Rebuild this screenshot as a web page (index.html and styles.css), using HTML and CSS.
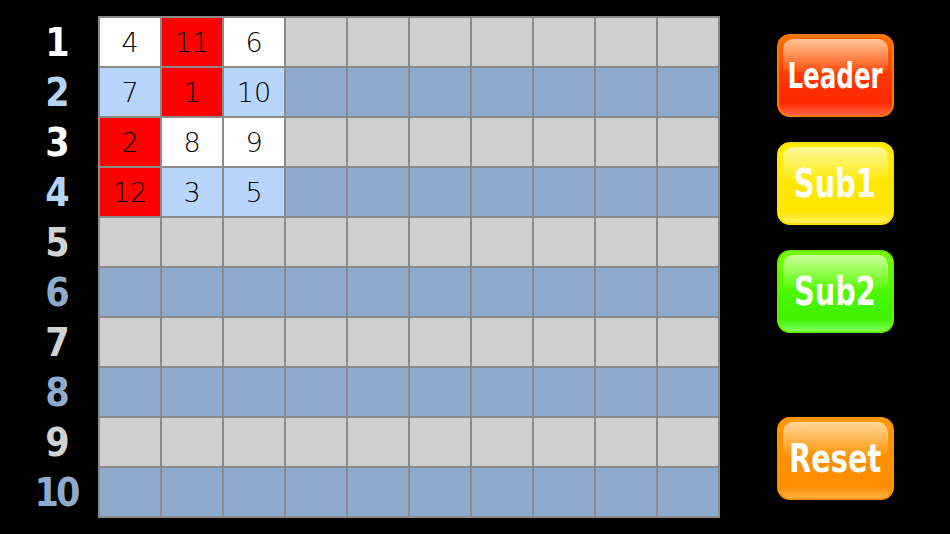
FILE: index.html
```html
<!DOCTYPE html>
<html lang="ja">
<head>
    <meta charset="UTF-8">
    <title>Order Board</title>
    <link rel="stylesheet" href="styles.css">
</head>
<body>
    <div class="board">
        <div class="labels">
            <div class="label lit">1</div>
            <div class="label lit-blue">2</div>
            <div class="label lit">3</div>
            <div class="label lit-blue">4</div>
            <div class="label">5</div>
            <div class="label blue">6</div>
            <div class="label">7</div>
            <div class="label blue">8</div>
            <div class="label">9</div>
            <div class="label blue">10</div>
        </div>

        <div class="grid" id="grid"></div>

        <div class="buttons">
            <button class="btn leader"><span>Leader</span></button>
            <button class="btn sub1"><span>Sub1</span></button>
            <button class="btn sub2"><span>Sub2</span></button>
            <button class="btn reset"><span>Reset</span></button>
        </div>
    </div>

    <script>
        // первые 4 строки x 3 столбца заполнены
        var filled = [
            [['4', 'w'], ['11', 'r'], ['6', 'w']],
            [['7', 'b'], ['1', 'r'], ['10', 'b']],
            [['2', 'r'], ['8', 'w'], ['9', 'w']],
            [['12', 'r'], ['3', 'b'], ['5', 'b']]
        ];
        var grid = document.getElementById('grid');
        for (var r = 0; r < 10; r++) {
            for (var c = 0; c < 10; c++) {
                var cell = document.createElement('div');
                cell.className = 'cell ' + (r % 2 ? 'odd' : 'even');
                if (filled[r] && filled[r][c]) {
                    cell.textContent = filled[r][c][0];
                    cell.className += ' ' + filled[r][c][1];
                }
                grid.appendChild(cell);
            }
        }
    </script>
</body>
</html>
```

FILE: styles.css
```css
body {
    margin: 0;
    background: #000;
    font-family: "DejaVu Sans", sans-serif;
}

.board {
    display: flex;
    padding-top: 16px;
}

.labels {
    width: 84px;
    padding-left: 14px;
    padding-top: 2px;
    display: flex;
    flex-direction: column;
    gap: 2px;
}

.label {
    height: 48px;
    line-height: 50px;
    text-align: center;
    font-family: "DejaVu Sans", sans-serif;
    font-stretch: condensed;
    font-weight: bold;
    font-size: 39px;
    letter-spacing: -3px;
    color: #d2d2d2;
}

.label.lit { color: #fff; }
.label.lit-blue { color: #b6d4f7; }
.label.blue { color: #8eaacd; }

.grid {
    display: grid;
    grid-template-columns: repeat(10, 60px);
    grid-auto-rows: 48px;
    gap: 2px;
    padding: 2px;
    background: #8a8a8a;
    align-self: flex-start;
}

.cell {
    display: flex;
    align-items: center;
    justify-content: center;
    font-family: "DejaVu Sans", sans-serif;
    font-weight: 200;
    font-size: 27px;
    color: #000;
}

.cell.even { background: #cfcfcf; }
.cell.odd { background: #8eaacd; }
.cell.w { background: #fff; }
.cell.r { background: #ff0000; }
.cell.b { background: #b8d6fb; }

.buttons {
    flex: 1;
    display: flex;
    flex-direction: column;
    align-items: center;
    padding-top: 18px;
    gap: 25px;
}

.btn {
    position: relative;
    width: 117px;
    height: 83px;
    border-radius: 13px;
    border: 2px solid;
    color: #fff;
    font-family: "DejaVu Sans", sans-serif;
    font-stretch: condensed;
    font-weight: bold;
    font-size: 39px;
    padding: 0;
    cursor: pointer;
    overflow: hidden;
    white-space: nowrap;
}

.btn span {
    position: relative;
    display: inline-block;
    transform: scaleX(0.82);
    margin: 0 -20px;
}

/* блик сверху */
.btn::before {
    content: "";
    position: absolute;
    left: 4px;
    right: 4px;
    top: 3px;
    height: 42%;
    border-radius: 10px 10px 6px 6px;
    background: linear-gradient(rgba(255, 255, 255, 0.6), rgba(255, 255, 255, 0.06));
}

.leader {
    font-size: 35px;
    border-color: #ff7a00;
    background: linear-gradient(#ff7000, #ff3000 60%, #ff2a00 85%, #ff6040);
}

.leader span {
    transform: scaleX(0.78);
}

.sub1 {
    border-color: #ffe000;
    background: linear-gradient(#ffee00, #ffe600 60%, #ffe800 85%, #fff060);
}

.sub2 {
    border-color: #66ee00;
    background: linear-gradient(#77ff00, #44f800 60%, #40f000 85%, #80ff60);
}

.reset {
    margin-top: 59px;
    border-color: #ff9500;
    background: linear-gradient(#ff9a00, #ff9000 60%, #ff8c00 85%, #ffb040);
}
```
